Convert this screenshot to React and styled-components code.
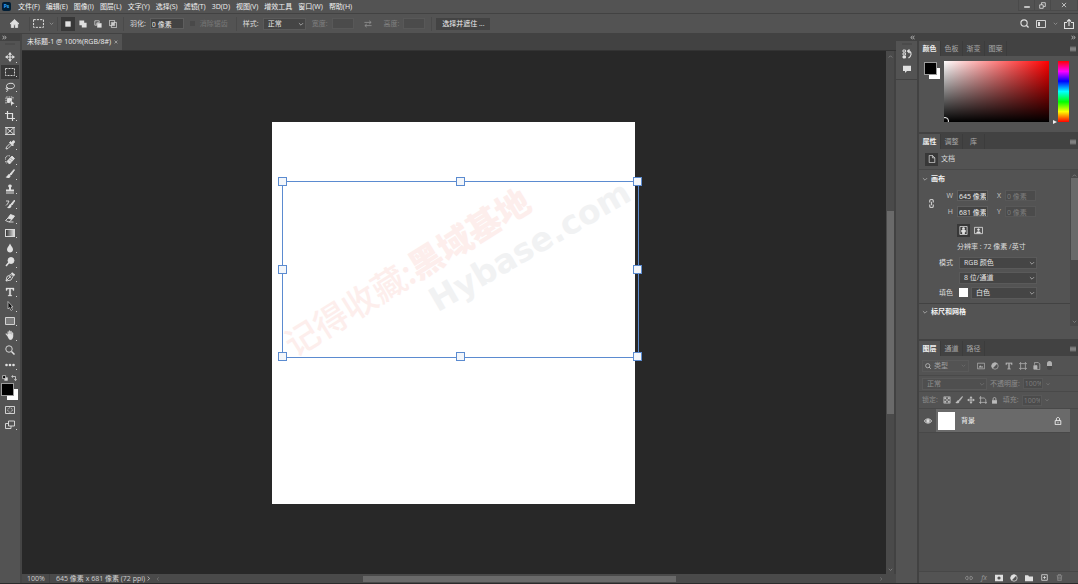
import React, { useState } from "react";
import styled, { createGlobalStyle } from "styled-components";

const menus = [
  "文件(F)",
  "编辑(E)",
  "图像(I)",
  "图层(L)",
  "文字(Y)",
  "选择(S)",
  "滤镜(T)",
  "3D(D)",
  "视图(V)",
  "增效工具",
  "窗口(W)",
  "帮助(H)",
];

// every glyph is drawn on a 20 x 20 grid
const glyphs = {
  home: <path d="M10 1 L0 10.500 H3 V19 H8 V13 H12 V19 H17 V10.500 H20 Z" fill="currentColor" />,
  move: (
    <>
      <path d="M10 3 V17 M3 10 H17" strokeWidth="2.400" />
      <path d="M10 0 L14 5.500 H6 Z M10 20 L14 14.500 H6 Z M0 10 L5.500 6 V14 Z M20 10 L14.500 6 V14 Z" fill="currentColor" stroke="none" />
    </>
  ),
  marquee: <path d="M1 3 H19 V17 H1 Z" strokeDasharray="4 2" />,
  lasso: (
    <>
      <ellipse cx="11" cy="8" rx="8" ry="5.500" transform="rotate(-10 11 8)" />
      <circle cx="4" cy="13" r="2" />
      <path d="M5 15 C7 17 4 19 2 19" />
    </>
  ),
  objectSelect: (
    <>
      <path d="M2 15 V2 H16 V7" strokeDasharray="3 1.500" />
      <path d="M5 5 H13 V9 H9 V13 H5 Z" fill="currentColor" />
      <path d="M10 8 L19 15 L15 16 L13 20 Z" fill="currentColor" stroke="none" />
    </>
  ),
  crop: <path d="M5 0 V15 H20 M0 5 H15 V20" strokeWidth="2.400" />,
  frame: <path d="M2 3 H18 V17 H2 Z M2 3 L18 17 M18 3 L2 17 M0 3 H2 M18 17 H20 M0 17 H2 M18 3 H20" />,
  eyedropper: (
    <>
      <path d="M10 7 L3 14 L2 18 L6 17 L13 10" />
      <path d="M9 5 L11 3 L13 5 C15 1 20 0 19 4 C19 6 17 7 15 8 L17 10 L15 12 Z" fill="currentColor" />
    </>
  ),
  heal: (
    <>
      <path d="M4 13 L14 2 L19 7 L9 18 Z" fill="currentColor" />
      <path d="M1 9 C0 3 5 0 10 2 M1 12 L3 17" strokeDasharray="2 1" />
      <path d="M8 9 L12 13 M11 6 L15 10" stroke="#535353" strokeWidth="1" />
    </>
  ),
  brush: (
    <>
      <path d="M18 1 L10 10 L12 12 L19 2 Z" fill="currentColor" />
      <path d="M9 10 C5 10 6 15 1 16 C5 20 12 18 11 13 Z" fill="currentColor" stroke="none" />
    </>
  ),
  stamp: (
    <path d="M10 1 C6 1 5 5 8 7 V11 H2 V15 H18 V11 H12 V7 C15 5 14 1 10 1 Z M2 17 H18 V19 H2 Z" fill="currentColor" stroke="none" />
  ),
  history: (
    <>
      <path d="M19 2 L12 10 L14 12 L20 3 Z" fill="currentColor" />
      <path d="M11 10 C8 10 9 15 4 17 C8 20 14 18 13 12 Z" fill="currentColor" stroke="none" />
      <path d="M2 4 H8 L5 10 L2 13" />
    </>
  ),
  eraser: (
    <>
      <path d="M11 3 L19 6 L14 13 L6 10 Z" fill="currentColor" />
      <path d="M6 10 L1 15 L8 18 L14 13 M8 18 H17" />
    </>
  ),
  blur: <path d="M10 1 C8 6 4 9 4 13 C4 21 16 21 16 13 C16 9 12 6 10 1 Z" fill="currentColor" stroke="none" />,
  dodge: (
    <>
      <circle cx="12" cy="7" r="6" fill="currentColor" />
      <path d="M8 11 L2 18" strokeWidth="3" />
    </>
  ),
  pen: (
    <>
      <path d="M2 18 L4 9 L12 5 L16 9 L12 16 Z M2 18 L9 11" />
      <circle cx="10" cy="10" r="1.500" />
      <path d="M13 2 L19 7" strokeWidth="4" />
    </>
  ),
  type: (
    <path
      d="M2 2 H18 V7 H16 L15 4 H11.500 V16 L14 17 V18 H6 V17 L8.500 16 V4 H5 L4 7 H2 Z"
      fill="currentColor"
      strokeWidth="0.600"
    />
  ),
  pathSelect: <path d="M6 1 V16 L9 13 L12 19 L15 17 L12 12 H16 Z" fill="#111" strokeWidth="1.300" />,
  rect: <path d="M1 3 H19 V17 H1 Z" fill="#7c7c7c" />,
  hand: (
    <path
      d="M5 13 L1 8 C1 6 3 6 4 8 L5 9 V4 C5 2 7 2 7.500 4 V8 V2 C8 0 10 0 10.500 2 V8 V3 C11 1 13 1 13.500 3 V9 V5 C14 4 16 4 16.500 6 V13 C16 17 14 20 11 20 C8 20 7 17 5 13 Z"
      fill="currentColor"
      stroke="#535353"
      strokeWidth="0.300"
    />
  ),
  zoom: (
    <>
      <circle cx="8" cy="8" r="6.500" />
      <path d="M13 13 L19 19" strokeWidth="3" />
    </>
  ),
  dots: (
    <g fill="currentColor" stroke="none">
      <circle cx="3" cy="10" r="2.600" />
      <circle cx="10" cy="10" r="2.600" />
      <circle cx="17" cy="10" r="2.600" />
    </g>
  ),
  quickMask: (
    <>
      <path d="M1 3 H19 V17 H1 Z" />
      <circle cx="10" cy="10" r="4.500" strokeDasharray="2 1.500" />
    </>
  ),
  screen: (
    <>
      <path d="M7 2 H19 V12 H7 Z" />
      <path d="M7 7 H1 V17 H12 V12" />
    </>
  ),
  resetSwatch: (
    <>
      <path d="M8 8 H19 V19 H8 Z" fill="currentColor" stroke="none" />
      <path d="M2 2 H12 V12 H2 Z" fill="#000" strokeWidth="2.500" />
    </>
  ),
  turn: <path d="M3 5 H15 V17 M7 1 L2 5 L7 9 M11 14 L15 19 L19 14" strokeWidth="2.600" />,
  chevron: <path d="M3 7 L10 14 L17 7" strokeWidth="3" />,
  chevronUp: <path d="M3 14 L10 7 L17 14" strokeWidth="3" />,
  chevronRight: <path d="M7 2 L14 10 L7 18" strokeWidth="3" />,
  chevronLeft: <path d="M13 2 L6 10 L13 18" strokeWidth="3" />,
  doubleRight: <path d="M2 4 L9 10 L2 16 M10 4 L17 10 L10 16" strokeWidth="3" />,
  doubleLeft: <path d="M10 4 L3 10 L10 16 M18 4 L11 10 L18 16" strokeWidth="3" />,
  newSel: <path d="M1 1 H19 V19 H1 Z" fill="currentColor" stroke="none" />,
  addSel: <path d="M1 1 H13 V7 H19 V19 H7 V13 H1 Z" fill="currentColor" stroke="none" />,
  subSel: (
    <>
      <path d="M2 2 H13 V7 H7 V13 H2 Z" />
      <path d="M8 8 H19 V19 H8 Z" fill="currentColor" stroke="none" />
    </>
  ),
  crossSel: (
    <>
      <path d="M1 1 H14 V14 H1 Z M6 6 H19 V19 H6 Z" />
      <path d="M8 8 H12 V12 H8 Z" fill="currentColor" />
    </>
  ),
  swap: <path d="M1 6 H17 M13 2 L18 6 L13 10 M19 14 H3 M7 10 L2 14 L7 18" />,
  search: (
    <>
      <circle cx="9" cy="9" r="7" strokeWidth="2.400" />
      <path d="M14 14 L19 19" strokeWidth="3" />
    </>
  ),
  workspace: (
    <>
      <path d="M1 3 H19 V17 H1 Z" />
      <path d="M4 6 H8 V14 H4 Z" fill="currentColor" stroke="none" />
    </>
  ),
  share: <path d="M6 7 H1 V19 H19 V7 H14 M10 14 V2 M6 5 L10 1 L14 5" strokeWidth="2.200" />,
  minimise: <path d="M3 15 H17" strokeWidth="4" />,
  restore: <path d="M2 8 H12 V18 H2 Z M7 8 V2 H18 V13 H12" strokeWidth="2.400" />,
  close: <path d="M3 3 L17 17 M17 3 L3 17" strokeWidth="2.600" />,
  historyPanel: (
    <>
      <path d="M2 2 H7 V6 H2 Z M2 8 H7 V12 H2 Z" />
      <path d="M2 14 H7 V18 H2 Z" fill="currentColor" />
      <path d="M11 4 H15 C20 8 19 14 13 18 M15 1 L11 4 L15 8" strokeWidth="2.200" />
    </>
  ),
  comment: <path d="M0 2 H20 V15 H10 L5 20 V15 H0 Z" fill="currentColor" stroke="none" />,
  menu: <path d="M0 4 H20 M0 8 H20 M0 12 H20 M0 16 H20" strokeWidth="3" />,
  page: <path d="M3 1 H11 L17 7 V19 H3 Z M11 1 V7 H17" />,
  chain: <path d="M6 8 V4 C6 0 14 0 14 4 V8 M6 12 V16 C6 20 14 20 14 16 V12 M10 6 V14" strokeWidth="2.600" />,
  portrait: (
    <>
      <path d="M2 1 H18 V19 H2 Z" />
      <circle cx="10" cy="6" r="2.500" fill="currentColor" />
      <path d="M5 9 H15 V14 H13 V18 H7 V14 H5 Z" fill="currentColor" stroke="none" />
    </>
  ),
  landscape: (
    <>
      <path d="M1 3 H19 V17 H1 Z" />
      <circle cx="10" cy="8" r="2" fill="currentColor" />
      <path d="M5 16 C5 10 15 10 15 16 Z" fill="currentColor" stroke="none" />
    </>
  ),
  image: (
    <>
      <path d="M1 3 H19 V17 H1 Z" />
      <path d="M4 14 L8 8 L11 12 L13 10 L16 14 Z" fill="currentColor" stroke="none" />
    </>
  ),
  adjust: (
    <>
      <circle cx="10" cy="10" r="8" />
      <path d="M16 4 A8 8 0 0 0 4 16 Z" fill="currentColor" stroke="none" />
    </>
  ),
  shape: <path d="M4 4 H16 V16 H4 Z M4 0 V4 H0 M16 0 V4 H20 M4 20 V16 H0 M16 20 V16 H20" />,
  smart: (
    <>
      <path d="M4 7 V1 H13 L17 5 V19 H9" />
      <path d="M2 9 H10 V18 H2 Z" fill="currentColor" />
    </>
  ),
  checker: (
    <>
      <path d="M2 2 H18 V18 H2 Z" />
      <path d="M3 3 H8 V8 H3 Z M12 3 H17 V8 H12 Z M8 8 H12 V12 H8 Z M3 12 H8 V17 H3 Z M12 12 H17 V17 H12 Z" fill="currentColor" stroke="none" />
    </>
  ),
  artboard: <path d="M4 0 V20 M0 5 H13 L17 9 V20 M0 16 H20" />,
  lock: (
    <>
      <path d="M3 9 H17 V19 H3 Z" fill="currentColor" stroke="none" />
      <path d="M6 9 V5 C6 0 14 0 14 5 V9" strokeWidth="2.400" />
    </>
  ),
  lockOutline: (
    <>
      <path d="M3 9 H17 V19 H3 Z M6 9 V5 C6 0 14 0 14 5 V9" strokeWidth="2.200" />
      <path d="M10 12 V16" />
    </>
  ),
  eye: (
    <>
      <path d="M1 10 C5 3 15 3 19 10 C15 17 5 17 1 10 Z" strokeWidth="2.400" />
      <circle cx="10" cy="10" r="3.500" fill="currentColor" />
    </>
  ),
  link: <path d="M8 6 H5 C0 6 0 14 5 14 H8 M12 6 H15 C20 6 20 14 15 14 H12 M5 10 H15" />,
  mask: <path fillRule="evenodd" d="M0 2 H20 V18 H0 Z M10 6 A4 4 0 1 0 10 14 A4 4 0 1 0 10 6 Z" fill="currentColor" stroke="none" />,
  folder: <path d="M0 3 H8 L10 6 H20 V18 H0 Z" fill="currentColor" stroke="none" />,
  plus: <path d="M2 2 H18 V18 H2 Z M10 6 V14 M6 10 H14" strokeWidth="2.200" />,
  trash: <path d="M2 5 H18 M7 4 V1 H13 V4 M4 6 L5 19 H15 L16 6 M8 8 V16 M12 8 V16" />,
};

const tools = [
  { name: "move", label: "移动工具" },
  { name: "marquee", label: "矩形选框工具" },
  { name: "lasso", label: "套索工具" },
  { name: "objectSelect", label: "对象选择工具" },
  { name: "crop", label: "裁剪工具" },
  { name: "frame", label: "图框工具", single: true },
  { name: "eyedropper", label: "吸管工具" },
  { name: "heal", label: "修复画笔工具" },
  { name: "brush", label: "画笔工具" },
  { name: "stamp", label: "仿制图章工具" },
  { name: "history", label: "历史记录画笔工具" },
  { name: "eraser", label: "橡皮擦工具" },
  { name: "gradient", label: "渐变工具" },
  { name: "blur", label: "模糊工具" },
  { name: "dodge", label: "减淡工具" },
  { name: "pen", label: "钢笔工具" },
  { name: "type", label: "文字工具" },
  { name: "pathSelect", label: "路径选择工具" },
  { name: "rect", label: "矩形工具" },
  { name: "hand", label: "抓手工具" },
  { name: "zoom", label: "缩放工具", single: true },
  { name: "dots", label: "编辑工具栏" },
];

const handles = ["0% 0%", "50% 0%", "100% 0%", "0% 50%", "100% 50%", "0% 100%", "50% 100%", "100% 100%"];

function Icon({ name, size = 10 }) {
  return (
    <Svg
      viewBox="0 0 20 20"
      width={size}
      height={size}
      fill="none"
      stroke="currentColor"
      strokeWidth="1.800"
      aria-hidden="true"
    >
      {glyphs[name]}
    </Svg>
  );
}

function Picker({ label, value, width, grow, dim }) {
  return (
    <SelectBox $width={width} $grow={grow} $dim={dim}>
      <select aria-label={label} defaultValue={value}>
        <option>{value}</option>
      </select>
      <Icon name="chevron" size={6} />
    </SelectBox>
  );
}

function PanelTabs({ items }) {
  return (
    <TabRow role="tablist">
      {items.map((item, i) => (
        <PanelTab key={item} role="tab" aria-selected={i === 0} $active={i === 0}>
          {item}
        </PanelTab>
      ))}
      <TabMenu aria-label="面板菜单">
        <Icon name="menu" size={6} />
      </TabMenu>
    </TabRow>
  );
}

function App() {
  const [tool, setTool] = useState("marquee");

  return (
    <Shell>
      <GlobalStyle />
      <MenuBar>
        <Logo>Ps</Logo>
        <MenuList>
          {menus.map((m) => (
            <MenuItem key={m}>{m}</MenuItem>
          ))}
        </MenuList>
        <WindowButtons>
          <button aria-label="最小化"><Icon name="minimise" size={8} /></button>
          <button aria-label="还原"><Icon name="restore" size={7} /></button>
          <button aria-label="关闭"><Icon name="close" size={6} /></button>
        </WindowButtons>
      </MenuBar>

      <OptionsBar>
        <OptionGroup $pad={8}>
          <IconButton $w={13} $h={13} aria-label="主页"><Icon name="home" size={9} /></IconButton>
        </OptionGroup>
        <OptionGroup $pad={2} $gap={2}>
          <IconButton $w={13} $h={13} aria-label="矩形选框"><Icon name="marquee" size={11} /></IconButton>
          <IconButton $w={8} $h={13} $dim aria-label="预设"><Icon name="chevron" size={5} /></IconButton>
        </OptionGroup>
        <OptionGroup $pad={3} $gap={1}>
          <IconButton $w={14} $h={14} $active aria-label="新选区"><Icon name="newSel" size={6} /></IconButton>
          <IconButton $w={14} $h={14} aria-label="添加到选区"><Icon name="addSel" size={8} /></IconButton>
          <IconButton $w={14} $h={14} aria-label="从选区减去"><Icon name="subSel" size={8} /></IconButton>
          <IconButton $w={14} $h={14} aria-label="与选区交叉"><Icon name="crossSel" size={8} /></IconButton>
        </OptionGroup>
        <OptionGroup $pad={6} $gap={4}>
          <label htmlFor="feather">羽化:</label>
          <Field id="feather" defaultValue="0 像素" $w={34} />
          <CheckLabel>
            <input type="checkbox" disabled />
            消除锯齿
          </CheckLabel>
        </OptionGroup>
        <OptionGroup $pad={6} $gap={4}>
          <span>样式:</span>
          <Picker label="样式" value="正常" width={43} />
          <DimLabel htmlFor="optWidth">宽度:</DimLabel>
          <Field id="optWidth" disabled $w={22} />
          <IconButton $w={20} $h={13} $dim aria-label="互换"><Icon name="swap" size={8} /></IconButton>
          <DimLabel htmlFor="optHeight">高度:</DimLabel>
          <Field id="optHeight" disabled $w={22} />
        </OptionGroup>
        <OptionGroup $pad={4} $last>
          <MaskButton>选择并遮住 ...</MaskButton>
        </OptionGroup>
        <OptionTail>
          <IconButton $w={12} $h={13} aria-label="搜索"><Icon name="search" size={9} /></IconButton>
          <IconButton $w={12} $h={13} aria-label="工作区"><Icon name="workspace" size={10} /></IconButton>
          <IconButton $w={6} $h={13} $dim aria-label="工作区列表"><Icon name="chevron" size={5} /></IconButton>
          <IconButton $w={12} $h={13} aria-label="共享"><Icon name="share" size={10} /></IconButton>
        </OptionTail>
      </OptionsBar>

      <Workspace>
        <ToolColumn>
          <DockHeader><Icon name="doubleRight" size={5} /></DockHeader>
          <Grip />
          <ToolList>
            {tools.map((t) => (
              <ToolButton
                key={t.name}
                aria-label={t.label}
                $active={tool === t.name}
                $single={t.single}
                onClick={() => setTool(t.name)}
              >
                {t.name === "gradient" ? <GradientChip /> : <Icon name={t.name} size={10} />}
              </ToolButton>
            ))}
          </ToolList>
          <SwatchTools>
            <Icon name="resetSwatch" size={6} />
            <Icon name="turn" size={6} />
          </SwatchTools>
          <Swatches />
          <ToolFoot>
            <ToolButton $single aria-label="快速蒙版"><Icon name="quickMask" size={10} /></ToolButton>
            <ToolButton aria-label="屏幕模式"><Icon name="screen" size={10} /></ToolButton>
          </ToolFoot>
        </ToolColumn>

        <DocumentArea>
          <DocTabs>
            <DocTab>
              未标题-1 @ 100%(RGB/8#)
              <button aria-label="关闭文档"><Icon name="close" size={4} /></button>
            </DocTab>
          </DocTabs>
          <Stage>
            <Pasteboard>
              <Artboard>
                <Watermark $left={15} $top={206} $angle={-32} $color="#fdeeec">
                  记得收藏:<b>黑域基地</b>
                </Watermark>
                <Watermark $left={160} $top={163} $angle={-30} $color="#f1f2f3" $latin>
                  Hybase.com
                </Watermark>
                <Selection>
                  {handles.map((h) => (
                    <Handle key={h} style={{ left: h.split(" ")[0], top: h.split(" ")[1] }} />
                  ))}
                </Selection>
              </Artboard>
            </Pasteboard>
            <VerticalScroll $before={152} $thumb={202} $after={153}>
              <Icon name="chevronUp" size={5} />
              <i />
              <Icon name="chevron" size={5} />
            </VerticalScroll>
          </Stage>
          <StatusBar>
            <Zoom>100%</Zoom>
            <DocInfo>645 像素 x 681 像素 (72 ppi)</DocInfo>
            <Icon name="chevronRight" size={5} />
            <HorizontalScroll>
              <Icon name="chevronLeft" size={4} />
              <i />
              <Icon name="chevronRight" size={4} />
            </HorizontalScroll>
          </StatusBar>
        </DocumentArea>

        <IconDock>
          <DockHeader $end><Icon name="doubleLeft" size={5} /></DockHeader>
          <Grip $tight />
          <DockButtons>
            <IconButton $w={16} $h={14} aria-label="历史记录"><Icon name="historyPanel" size={10} /></IconButton>
            <IconButton $w={16} $h={14} aria-label="注释"><Icon name="comment" size={8} /></IconButton>
          </DockButtons>
        </IconDock>

        <Panels>
          <DockHeader $end><Icon name="doubleRight" size={5} /></DockHeader>
          <Panel $height={93}>
            <PanelTabs items={["颜色", "色板", "渐变", "图案"]} />
            <ColorBody>
              <Swatches $small />
              <ColorField />
              <HueBar />
            </ColorBody>
          </Panel>

          <Panel $height={207}>
            <PanelTabs items={["属性", "调整", "库"]} />
            <DocRow>
              <IconButton as="span" $w={13} $h={13} $active><Icon name="page" size={8} /></IconButton>
              文档
            </DocRow>
            <PropsBody>
              <PropsScroll>
                <SectionTitle>
                  <Icon name="chevron" size={6} />
                  画布
                </SectionTitle>
                <SizeGrid>
                  <ChainCell><Icon name="chain" size={9} /></ChainCell>
                  <label htmlFor="w">W</label>
                  <Field id="w" defaultValue="645 像素" $w={31} />
                  <label htmlFor="x">X</label>
                  <Field id="x" defaultValue="0 像素" disabled $w={31} />
                  <label htmlFor="h">H</label>
                  <Field id="h" defaultValue="681 像素" $w={31} />
                  <label htmlFor="y">Y</label>
                  <Field id="y" defaultValue="0 像素" disabled $w={31} />
                </SizeGrid>
                <Orientation>
                  <IconButton $w={13} $h={13} $active aria-label="纵向"><Icon name="portrait" size={9} /></IconButton>
                  <IconButton $w={14} $h={13} aria-label="横向"><Icon name="landscape" size={9} /></IconButton>
                </Orientation>
                <Resolution>分辨率 : 72 像素 /英寸</Resolution>
                <PropRow>
                  <span>模式</span>
                  <Picker label="模式" value="RGB 颜色" grow />
                </PropRow>
                <PropRow>
                  <span />
                  <Picker label="位深" value="8 位/通道" grow />
                </PropRow>
                <PropRow>
                  <span>填色</span>
                  <FillChip />
                  <Picker label="填色" value="白色" grow />
                </PropRow>
                <SectionTitle $ruled>
                  <Icon name="chevron" size={6} />
                  标尺和网格
                </SectionTitle>
              </PropsScroll>
              <VerticalScroll $before={0} $thumb={79} $after={57} $short>
                <Icon name="chevronUp" size={5} />
                <i />
                <Icon name="chevron" size={5} />
              </VerticalScroll>
            </PropsBody>
          </Panel>

          <Panel $fill>
            <PanelTabs items={["图层", "通道", "路径"]} />
            <LayerRow $h={20}>
              <SearchBox>
                <Icon name="search" size={6} />
                类型
                <Icon name="chevron" size={5} />
              </SearchBox>
              <FilterIcons>
                <Icon name="image" size={8} />
                <Icon name="adjust" size={8} />
                <Icon name="type" size={8} />
                <Icon name="shape" size={8} />
                <Icon name="smart" size={8} />
                <FilterToggle />
              </FilterIcons>
            </LayerRow>
            <LayerRow $h={16} $dim>
              <Picker label="混合模式" value="正常" width={65} dim />
              <label htmlFor="opacity">不透明度:</label>
              <Field id="opacity" defaultValue="100%" disabled $w={20} />
              <Icon name="chevron" size={4} />
            </LayerRow>
            <LayerRow $h={17} $dim>
              <span>锁定:</span>
              <LockIcons>
                <Icon name="checker" size={8} />
                <Icon name="brush" size={8} />
                <Icon name="move" size={8} />
                <Icon name="artboard" size={8} />
                <Icon name="lock" size={7} />
              </LockIcons>
              <label htmlFor="fill">填充:</label>
              <Field id="fill" defaultValue="100%" disabled $w={20} />
              <Icon name="chevron" size={4} />
            </LayerRow>
            <LayerList>
              <Layer>
                <EyeCell aria-label="可见性"><Icon name="eye" size={8} /></EyeCell>
                <LayerMain>
                  <Thumb />
                  背景
                  <Icon name="lockOutline" size={8} />
                </LayerMain>
              </Layer>
            </LayerList>
            <LayerFoot>
              <IconButton $w={10} $h={9} $dim aria-label="链接"><Icon name="link" size={8} /></IconButton>
              <FxButton>fx</FxButton>
              <IconButton $w={10} $h={9} aria-label="蒙版"><Icon name="mask" size={8} /></IconButton>
              <IconButton $w={10} $h={9} aria-label="调整图层"><Icon name="adjust" size={8} /></IconButton>
              <IconButton $w={10} $h={9} aria-label="新建组"><Icon name="folder" size={8} /></IconButton>
              <IconButton $w={10} $h={9} aria-label="新建图层"><Icon name="plus" size={7} /></IconButton>
              <IconButton $w={10} $h={9} $dim aria-label="删除"><Icon name="trash" size={7} /></IconButton>
            </LayerFoot>
          </Panel>
        </Panels>
      </Workspace>
    </Shell>
  );
}

const GlobalStyle = createGlobalStyle`
  * {
    box-sizing: border-box;
  }

  body {
    margin: 0;
    background: #282828;
  }

  body, button, input, select {
    font-family: "Open Sans", "Noto Sans CJK SC", sans-serif;
    font-size: 7px;
    line-height: 10px;
    color: #dcdcdc;
  }

  button {
    padding: 0;
    border: 0;
    background: none;
    white-space: nowrap;
  }
`;

const Svg = styled.svg`
  display: block;
  flex: none;
`;

const Shell = styled.div`
  display: flex;
  flex-direction: column;
  height: 100vh;
  overflow: hidden;
  background: #535353;
  border-bottom: 1px solid #2b2b2b;
`;

const MenuBar = styled.header`
  display: flex;
  align-items: center;
  flex: none;
  height: 14px;
  border-bottom: 1px solid #424242;
`;

const Logo = styled.span`
  width: 9px;
  height: 9px;
  margin: 0 7px 0 2px;
  border-radius: 2px;
  background: #001e36;
  color: #31a8ff;
  font-size: 5px;
  font-weight: 700;
  line-height: 9px;
  text-align: center;
`;

const MenuList = styled.nav`
  display: flex;
  gap: 6px;
`;

const MenuItem = styled.button`
  color: #f2f2f2;
`;

const WindowButtons = styled.div`
  display: flex;
  height: 11px;
  margin: 0 0 2px auto;
  border: 1px solid #4a4a4a;
  border-top: 0;

  button {
    display: flex;
    align-items: center;
    justify-content: center;
    width: 16px;
    border-right: 1px solid #4a4a4a;
  }

  button:last-child {
    width: 26px;
    border: 0;
  }
`;

const OptionsBar = styled.div`
  display: flex;
  align-items: center;
  flex: none;
  height: 20px;
  border-bottom: 1px solid #424242;
`;

const OptionGroup = styled.div`
  display: flex;
  align-items: center;
  gap: ${(p) => p.$gap || 0}px;
  height: 14px;
  padding: 0 ${(p) => p.$pad}px;
  white-space: nowrap;
  border-right: ${(p) => (p.$last ? "0" : "1px solid #4a4a4a")};
`;

const OptionTail = styled.div`
  display: flex;
  align-items: center;
  gap: 5px;
  margin-left: auto;
  padding-right: 3px;
`;

const IconButton = styled.button`
  display: flex;
  align-items: center;
  justify-content: center;
  flex: none;
  width: ${(p) => p.$w}px;
  height: ${(p) => p.$h}px;
  color: ${(p) => (p.$dim ? "#9a9a9a" : "#e0e0e0")};
  background: ${(p) => (p.$active ? "#383838" : "transparent")};
`;

const Field = styled.input`
  width: ${(p) => p.$w}px;
  height: 11px;
  padding: 0 1px;
  border: 1px solid #5e5e5e;
  border-radius: 0;
  background: #434343;
  color: #ededed;

  &:disabled {
    background: #4b4b4b;
    border-color: #585858;
    color: #7c7c7c;
  }
`;

const CheckLabel = styled.label`
  display: flex;
  align-items: center;
  gap: 5px;
  padding: 0 2px;
  color: #777;

  input {
    appearance: none;
    width: 5px;
    height: 5px;
    margin: 0;
    background: #494949;
  }
`;

const DimLabel = styled.label`
  padding-left: 2px;
  color: #808080;
`;

const SelectBox = styled.span`
  display: flex;
  align-items: center;
  position: relative;
  flex: ${(p) => (p.$grow ? "1" : "none")};
  width: ${(p) => (p.$width ? p.$width + "px" : "auto")};
  height: 12px;
  border: 1px solid #5a5a5a;
  background: ${(p) => (p.$dim ? "#4f4f4f" : "#454545")};

  select {
    appearance: none;
    width: 100%;
    height: 10px;
    padding: 0 4px;
    border: 0;
    background: transparent;
    color: ${(p) => (p.$dim ? "#909090" : "#e4e4e4")};
  }

  svg {
    position: absolute;
    right: 1px;
    color: ${(p) => (p.$dim ? "#6c6c6c" : "#a8a8a8")};
    pointer-events: none;
  }
`;

const MaskButton = styled.button`
  width: 54px;
  height: 12px;
  background: #434343;
  color: #f0f0f0;
`;

const Workspace = styled.main`
  display: flex;
  flex: 1;
  min-height: 0;
`;

const ToolColumn = styled.aside`
  display: flex;
  flex-direction: column;
  flex: none;
  width: 22px;
  border-right: 2px solid #454545;
`;

const DockHeader = styled.div`
  display: flex;
  align-items: center;
  justify-content: ${(p) => (p.$end ? "flex-end" : "flex-start")};
  flex: none;
  height: 7px;
  padding: 0 2px;
  background: #424242;
`;

const Grip = styled.div`
  flex: none;
  width: 10px;
  height: 2px;
  margin: 2px auto ${(p) => (p.$tight ? 2 : 5)}px;
  background: #4b4b4b;
`;

const ToolList = styled.div`
  display: flex;
  flex-direction: column;
  flex: none;
  height: 322px;
`;

const ToolButton = styled.button`
  display: flex;
  align-items: center;
  justify-content: center;
  position: relative;
  flex: 1;
  margin: 0 1px;
  color: #e0e0e0;
  background: ${(p) => (p.$active ? "#383838" : "transparent")};

  &::after {
    content: "";
    display: ${(p) => (p.$single ? "none" : "block")};
    position: absolute;
    right: 2px;
    bottom: 2px;
    width: 1px;
    height: 1px;
    background: #d0d0d0;
  }
`;

const GradientChip = styled.span`
  width: 10px;
  height: 8px;
  border: 1px solid #d8d8d8;
  background: linear-gradient(90deg, #333, #ddd);
`;

const SwatchTools = styled.div`
  display: flex;
  align-items: center;
  gap: 3px;
  height: 11px;
  padding-left: 2px;
`;

const Swatches = styled.div`
  position: relative;
  flex: none;
  width: ${(p) => (p.$small ? 16 : 17)}px;
  height: 17px;
  margin: ${(p) => (p.$small ? "1px 0 0" : "0 0 0 1px")};

  &::before,
  &::after {
    content: "";
    position: absolute;
    width: 11px;
    height: 11px;
  }

  &::before {
    right: 0;
    bottom: 0;
    background: #fff;
  }

  &::after {
    left: 0;
    top: 0;
    background: #000;
    border: 1px solid #9c9c9c;
  }
`;

const ToolFoot = styled.div`
  display: flex;
  flex-direction: column;
  height: 30px;
  margin-top: 2px;
`;

const DocumentArea = styled.section`
  display: flex;
  flex-direction: column;
  flex: 1;
  min-width: 0;
`;

const DocTabs = styled.div`
  display: flex;
  flex: none;
  height: 17px;
  background: #424242;
  border-bottom: 1px solid #333;
`;

const DocTab = styled.div`
  display: flex;
  align-items: center;
  gap: 3px;
  padding: 0 4px 0 5px;
  background: #535353;
  color: #ececec;
  white-space: nowrap;
`;

const Stage = styled.div`
  display: flex;
  flex: 1;
  min-height: 0;
`;

const Pasteboard = styled.div`
  display: flex;
  align-items: center;
  justify-content: center;
  flex: 1;
  min-width: 0;
  padding: 1px 1px 0 0;
  overflow: hidden;
  background: #282828;
`;

const Artboard = styled.div`
  position: relative;
  flex: none;
  width: 363px;
  height: 382px;
  background: #fff;
`;

const Watermark = styled.div`
  position: absolute;
  left: ${(p) => p.$left}px;
  top: ${(p) => p.$top}px;
  transform: rotate(${(p) => p.$angle}deg);
  transform-origin: 0 50%;
  font-family: ${(p) => (p.$latin ? '"DejaVu Sans"' : '"Noto Sans CJK SC"')}, sans-serif;
  font-size: ${(p) => (p.$latin ? 33 : 34)}px;
  font-weight: ${(p) => (p.$latin ? 700 : 500)};
  line-height: 36px;
  white-space: nowrap;
  color: ${(p) => p.$color};

  b {
    font-weight: 900;
  }
`;

const Selection = styled.div`
  position: absolute;
  left: 10px;
  top: 59px;
  width: 357px;
  height: 177px;
  border: 1px solid #5b8bd0;
`;

const Handle = styled.span`
  position: absolute;
  width: 9px;
  height: 9px;
  margin: -5px 0 0 -5px;
  border: 1px solid #5b8bd0;
  background: #f3f6fa;
`;

const VerticalScroll = styled.div`
  display: flex;
  flex-direction: column;
  align-items: center;
  flex: none;
  width: ${(p) => (p.$short ? 8 : 10)}px;
  height: ${(p) => (p.$short ? "156px" : "auto")};
  padding: 3px 0 2px;
  background: #4a4a4a;
  border-right: ${(p) => (p.$short ? "0" : "2px solid #424242")};
  color: #888;

  /* weighted spacers keep the thumb in proportion to the track */
  &::before {
    content: "";
    order: 1;
    flex: ${(p) => p.$before};
  }

  &::after {
    content: "";
    order: 3;
    flex: ${(p) => p.$after};
  }

  i {
    order: 2;
    flex: ${(p) => p.$thumb};
    width: 7px;
    background: #6a6a6a;
  }

  svg:last-of-type {
    order: 4;
  }
`;

const StatusBar = styled.footer`
  display: flex;
  align-items: center;
  flex: none;
  height: 9px;
  background: #4a4a4a;
  color: #d0d0d0;
  white-space: nowrap;
`;

const Zoom = styled.span`
  width: 28px;
  padding-left: 5px;
  border-right: 1px solid #424242;
`;

const DocInfo = styled.span`
  width: 96px;
  padding-left: 6px;
`;

const HorizontalScroll = styled.div`
  display: flex;
  align-items: center;
  flex: 1;
  padding: 0 13px 0 5px;
  color: #888;

  &::before {
    content: "";
    order: 1;
    flex: 203;
  }

  &::after {
    content: "";
    order: 3;
    flex: 203;
  }

  i {
    order: 2;
    flex: 312;
    height: 6px;
    background: #6a6a6a;
  }

  svg:last-of-type {
    order: 4;
  }
`;

const IconDock = styled.aside`
  flex: none;
  width: 23px;
  border-right: 2px solid #424242;
`;

const DockButtons = styled.div`
  display: flex;
  flex-direction: column;
  align-items: center;
  gap: 1px;
  padding-bottom: 3px;
  border-bottom: 1px solid #424242;
`;

const Panels = styled.aside`
  display: flex;
  flex-direction: column;
  flex: none;
  width: 159px;
`;

const Panel = styled.section`
  display: flex;
  flex-direction: column;
  flex: ${(p) => (p.$fill ? "1" : "none")};
  height: ${(p) => (p.$height ? p.$height + "px" : "auto")};
  min-height: 0;
  border-bottom: ${(p) => (p.$fill ? "0" : "2px solid #424242")};
`;

const TabRow = styled.div`
  display: flex;
  flex: none;
  height: 15px;
  background: #424242;
`;

const PanelTab = styled.button`
  min-width: 22px;
  padding: 0 3px;
  border-right: 1px solid #3c3c3c;
  background: ${(p) => (p.$active ? "#535353" : "transparent")};
  color: ${(p) => (p.$active ? "#eee" : "#a8a8a8")};
  font-weight: ${(p) => (p.$active ? 700 : 400)};
`;

const TabMenu = styled.button`
  margin-left: auto;
  padding-right: 2px;
  color: #909090;
`;

const ColorBody = styled.div`
  display: flex;
  align-items: flex-start;
  flex: 1;
  padding: 5px 9px 0 5px;
`;

const ColorField = styled.div`
  position: relative;
  flex: 1;
  height: 61px;
  margin: 0 9px 0 4px;
  overflow: hidden;
  background: linear-gradient(to top, #000, transparent), linear-gradient(to right, #fff, #f00);

  &::after {
    content: "";
    position: absolute;
    left: -3px;
    bottom: -3px;
    width: 6px;
    height: 6px;
    border: 1px solid #fff;
    border-radius: 50%;
  }
`;

const HueBar = styled.div`
  position: relative;
  width: 11px;
  height: 61px;
  background: linear-gradient(#f00, #f0f 17%, #00f 33%, #0ff 50%, #0f0 67%, #ff0 83%, #f00);

  &::before {
    content: "";
    position: absolute;
    left: -5px;
    bottom: -2px;
    border: 2px solid transparent;
    border-left: 4px solid #eee;
    border-right: 0;
  }
`;

const DocRow = styled.div`
  display: flex;
  align-items: center;
  gap: 3px;
  flex: none;
  height: 21px;
  padding-left: 6px;
  border-bottom: 1px solid #484848;
`;

const PropsBody = styled.div`
  display: flex;
  flex: 1;
  min-height: 0;
`;

const PropsScroll = styled.div`
  flex: 1;
  min-width: 0;
`;

const SectionTitle = styled.h2`
  display: flex;
  align-items: center;
  gap: 3px;
  height: 17px;
  margin: ${(p) => (p.$ruled ? "3px 0 0" : "0")};
  padding-left: 3px;
  border-top: ${(p) => (p.$ruled ? "1px solid #424242" : "0")};
  color: #f4f4f4;
  font-size: 7px;
  font-weight: 700;

  svg {
    color: #a8a8a8;
  }
`;

const SizeGrid = styled.div`
  display: grid;
  grid-template-columns: 14px 10px 31px 11px 31px;
  grid-template-rows: 11px 11px;
  align-items: center;
  gap: 5px 3px;
  height: 31px;
  padding-left: 8px;
  margin-top: 3px;
  color: #c8c8c8;

  label {
    text-align: right;
    padding-right: 1px;
  }
`;

const ChainCell = styled.span`
  grid-row: span 2;
`;

const Orientation = styled.div`
  display: flex;
  gap: 1px;
  padding: 3px 0 0 38px;
`;

const Resolution = styled.div`
  height: 18px;
  padding-left: 38px;
  line-height: 20px;
  white-space: nowrap;
`;

const PropRow = styled.div`
  display: flex;
  align-items: center;
  gap: 3px;
  height: 15px;
  padding: 0 33px 0 20px;

  span:first-child {
    flex: none;
    width: 17px;
  }
`;

const FillChip = styled.i`
  width: 9px;
  height: 9px;
  background: #fff;
`;

const LayerRow = styled.div`
  display: flex;
  align-items: center;
  gap: 3px;
  flex: none;
  height: ${(p) => p.$h}px;
  padding: 0 3px;
  border-bottom: 1px solid #494949;
  color: ${(p) => (p.$dim ? "#8c8c8c" : "#b4b4b4")};
  white-space: nowrap;
`;

const SearchBox = styled.button`
  display: flex;
  align-items: center;
  gap: 3px;
  width: 47px;
  height: 12px;
  padding: 0 2px;
  border: 1px solid #5a5a5a;
  color: #a0a0a0;

  svg:first-child {
    color: #c8c8c8;
  }

  svg:last-child {
    margin-left: auto;
    color: #6c6c6c;
  }
`;

const FilterIcons = styled.div`
  display: flex;
  align-items: center;
  gap: 6px;
  padding-left: 5px;
`;

const FilterToggle = styled.span`
  width: 5px;
  height: 9px;
  border-radius: 3px;
  border-top: 5px solid #b0b0b0;
  background: #484848;
`;

const LockIcons = styled.div`
  display: flex;
  align-items: center;
  gap: 4px;
  padding: 0 2px;
  color: #bcbcbc;
`;

const LayerList = styled.div`
  flex: 1;
  min-height: 0;
  margin-right: 8px;
  background: #4f4f4f;
`;

const Layer = styled.div`
  display: flex;
  height: 24px;
  border-bottom: 1px solid #484848;
`;

const EyeCell = styled.button`
  display: flex;
  align-items: center;
  justify-content: center;
  width: 17px;
  background: #535353;
`;

const LayerMain = styled.div`
  display: flex;
  align-items: center;
  gap: 6px;
  flex: 1;
  padding: 0 8px 0 2px;
  background: #6a6a6a;
  color: #f2f2f2;

  svg {
    margin-left: auto;
  }
`;

const Thumb = styled.span`
  width: 17px;
  height: 18px;
  background: #fff;
`;

const LayerFoot = styled.div`
  display: flex;
  align-items: center;
  justify-content: flex-end;
  gap: 5px;
  flex: none;
  height: 12px;
  padding-right: 14px;
  border-top: 1px solid #474747;
`;

const FxButton = styled.button`
  width: 10px;
  color: #9a9a9a;
  font-style: italic;
`;

export default App;
